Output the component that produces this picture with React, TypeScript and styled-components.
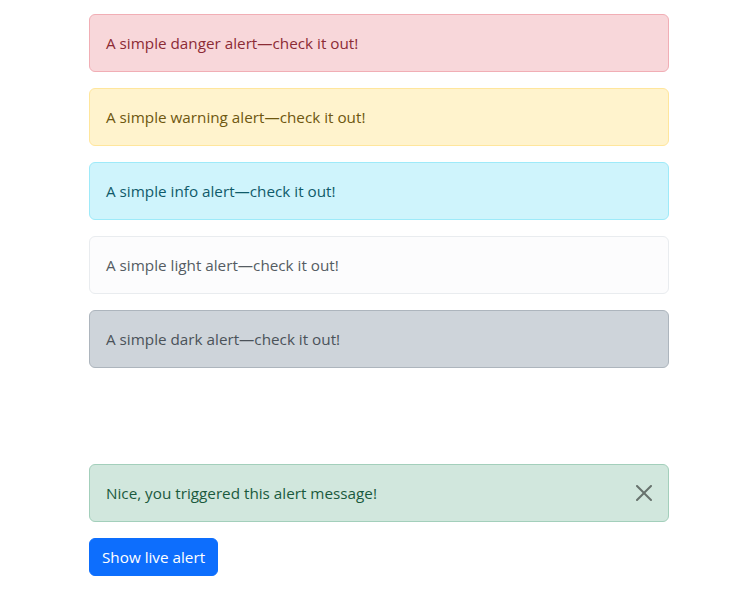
import React, { useState } from "react";
import styled, { createGlobalStyle } from "styled-components";

const GlobalStyle = createGlobalStyle`
  html, body { margin: 0; padding: 0; background: #fff; }
  body {
    font-family: "Open Sans", "Noto Sans", "Liberation Sans", sans-serif;
    font-size: 15.25px;
    line-height: 24px;
    color: #212529;
  }
  * { box-sizing: border-box; }
`;

type Variant = "danger" | "warning" | "info" | "light" | "dark" | "success";

const palette: Record<Variant, { bg: string; border: string; text: string }> = {
  danger: { bg: "#f8d7da", border: "#f1aeb5", text: "#8c2b35" },
  warning: { bg: "#fff3cd", border: "#ffe69c", text: "#6e5710" },
  info: { bg: "#cff4fc", border: "#9eeaf9", text: "#0f5b6a" },
  light: { bg: "#fcfcfd", border: "#e9ecef", text: "#555c63" },
  dark: { bg: "#ced4da", border: "#adb5bd", text: "#4b5259" },
  success: { bg: "#d1e7dd", border: "#a3cfbb", text: "#1a5a3d" },
};

const Page = styled.main`
  width: 580px;
  margin-left: 89px;
  padding-top: 14px;
  display: flex;
  flex-direction: column;
`;

const AlertList = styled.section`
  display: flex;
  flex-direction: column;
  gap: 16px;
`;

const Alert = styled.div<{ $variant: Variant; $dismissible?: boolean }>`
  position: relative;
  padding: 16px;
  padding-right: ${(p) => (p.$dismissible ? "48px" : "16px")};
  border: 1px solid ${(p) => palette[p.$variant].border};
  border-radius: 6px;
  background: ${(p) => palette[p.$variant].bg};
  color: ${(p) => palette[p.$variant].text};
  line-height: 24px;
`;

const LivePlaceholder = styled.div`
  margin-top: 96px;
  margin-bottom: 16px;
`;

const CloseButton = styled.button`
  position: absolute;
  top: 0;
  right: 0;
  width: 48px;
  height: 56px;
  padding: 0;
  border: 0;
  background: transparent;
  display: flex;
  align-items: center;
  justify-content: center;
  opacity: 0.5;
  cursor: pointer;
`;

const PrimaryButton = styled.button`
  align-self: flex-start;
  height: 38px;
  padding: 6px 12px;
  border: 1px solid #0d6efd;
  border-radius: 6px;
  background: #0d6efd;
  color: #fff;
  font-family: inherit;
  font-size: inherit;
  line-height: 24px;
  cursor: pointer;
`;

const items: { v: Variant; label: string }[] = [
  { v: "danger", label: "A simple danger alert—check it out!" },
  { v: "warning", label: "A simple warning alert—check it out!" },
  { v: "info", label: "A simple info alert—check it out!" },
  { v: "light", label: "A simple light alert—check it out!" },
  { v: "dark", label: "A simple dark alert—check it out!" },
];

export default function App() {
  const [shown, setShown] = useState(true);
  return (
    <>
      <GlobalStyle />
      <Page>
        <AlertList>
          {items.map((it) => (
            <Alert key={it.v} $variant={it.v} role="alert">
              {it.label}
            </Alert>
          ))}
        </AlertList>
        <LivePlaceholder>
          {shown && (
            <Alert $variant="success" $dismissible role="alert">
              Nice, you triggered this alert message!
              <CloseButton aria-label="Close" onClick={() => setShown(false)}>
                <svg width="16" height="16" viewBox="0 0 16 16">
                  <path
                    fill="#000"
                    d="M.293.293a1 1 0 0 1 1.414 0L8 6.586 14.293.293a1 1 0 1 1 1.414 1.414L9.414 8l6.293 6.293a1 1 0 0 1-1.414 1.414L8 9.414l-6.293 6.293a1 1 0 0 1-1.414-1.414L6.586 8 .293 1.707a1 1 0 0 1 0-1.414z"
                  />
                </svg>
              </CloseButton>
            </Alert>
          )}
        </LivePlaceholder>
        <PrimaryButton onClick={() => setShown(true)}>Show live alert</PrimaryButton>
      </Page>
    </>
  );
}
